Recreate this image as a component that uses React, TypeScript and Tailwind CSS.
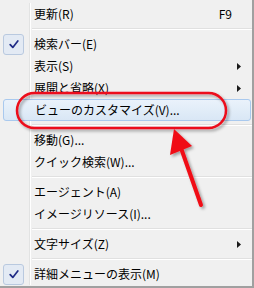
import React from "react";

type Item =
  | { kind: "sep" }
  | {
      kind: "item";
      label: string;
      checked?: boolean;
      sub?: boolean;
      shortcut?: string;
      active?: boolean;
    };

const items: Item[] = [
  { kind: "item", label: "更新(R)", shortcut: "F9" },
  { kind: "sep" },
  { kind: "item", label: "検索バー(E)", checked: true },
  { kind: "item", label: "表示(S)", sub: true },
  { kind: "item", label: "展開と省略(X)", sub: true },
  { kind: "item", label: "ビューのカスタマイズ(V)...", active: true },
  { kind: "sep" },
  { kind: "item", label: "移動(G)..." },
  { kind: "item", label: "クイック検索(W)..." },
  { kind: "sep" },
  { kind: "item", label: "エージェント(A)" },
  { kind: "item", label: "イメージリソース(I)..." },
  { kind: "sep" },
  { kind: "item", label: "文字サイズ(Z)", sub: true },
  { kind: "sep" },
  { kind: "item", label: "詳細メニューの表示(M)", checked: true },
];

function CheckBox() {
  return (
    <div className="ml-[3px] flex h-[21px] w-[21px] items-center justify-center rounded-[3px] border border-[#b9c9df] bg-[#e3eaf4]">
      <svg width="10" height="9" viewBox="0 0 10 9">
        <path
          d="M1.2 4.6 L3.8 7.4 L8.8 1"
          fill="none"
          stroke="#1f2a86"
          strokeWidth="1.7"
          strokeLinecap="round"
          strokeLinejoin="round"
        />
      </svg>
    </div>
  );
}

function SubArrow() {
  return (
    <svg width="4" height="7" viewBox="0 0 4 7" className="ml-auto mr-[11px]">
      <path d="M0 0 L4 3.5 L0 7 Z" fill="#1a1a1a" />
    </svg>
  );
}

function Row({ item }: { item: Extract<Item, { kind: "item" }> }) {
  if (item.active) {
    return (
      <div className="ml-[3px] mr-[1px] flex h-[22px] items-center rounded-[3px] border border-[#a9c9ee] bg-gradient-to-b from-[#eaf2fb] to-[#d9e7f5] pl-[31px]">
        <span>{item.label}</span>
      </div>
    );
  }
  return (
    <div className="flex h-[22px] items-center">
      <div className="flex h-full w-[30px] shrink-0 items-center border-r border-[#e2e3e3]">
        {item.checked && <CheckBox />}
      </div>
      <div className="h-full w-px bg-white" />
      <span className="pl-[3px]">{item.label}</span>
      {item.shortcut && (
        <span className="ml-auto mr-[20px]">{item.shortcut}</span>
      )}
      {item.sub && <SubArrow />}
    </div>
  );
}

function Separator() {
  return (
    <div className="flex h-[8px]">
      <div className="h-full w-[30px] shrink-0 border-r border-[#e2e3e3]" />
      <div className="h-full w-px bg-white" />
      <div className="flex flex-1 flex-col justify-center pl-px">
        <div className="h-px bg-[#e0e0e0]" />
        <div className="h-px bg-white" />
      </div>
    </div>
  );
}

export default function App() {
  return (
    <div
      className="relative h-[288px] w-[254px] overflow-hidden border-b-2 border-r-2 border-[#a0a0a0] bg-[#f0f0f0] pt-[3px] text-[12px] leading-none text-black"
      style={{ fontFamily: '"Noto Sans CJK JP", "Noto Sans", sans-serif' }}
    >
      {items.map((it, i) =>
        it.kind === "sep" ? <Separator key={i} /> : <Row key={i} item={it} />
      )}

      {/* annotation */}
      <svg
        className="pointer-events-none absolute left-0 top-0"
        width="254"
        height="288"
        viewBox="0 0 254 288"
      >
        <defs>
          <filter id="sh" x="-20%" y="-20%" width="140%" height="140%">
            <feDropShadow dx="2" dy="2" stdDeviation="1.5" floodColor="#000" floodOpacity="0.35" />
          </filter>
        </defs>
        <rect
          x="17"
          y="93"
          width="209"
          height="35"
          rx="17.5"
          fill="none"
          stroke="#ec0f1a"
          strokeWidth="2.5"
          filter="url(#sh)"
        />
        <g filter="url(#sh)">
          <line x1="181" y1="148" x2="201" y2="205" stroke="#f00d16" strokeWidth="4" strokeLinecap="round" />
          <path d="M174 129 L192 146 L170 155 Z" fill="#f00d16" />
        </g>
      </svg>
    </div>
  );
}
